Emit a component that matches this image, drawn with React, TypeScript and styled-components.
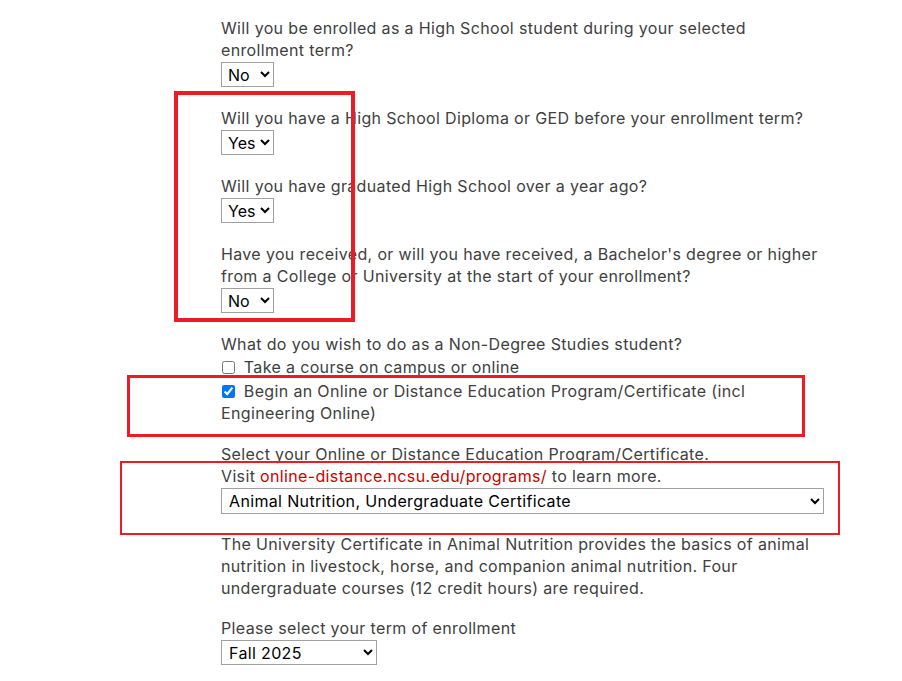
import React from "react";
import styled, { createGlobalStyle } from "styled-components";

const Global = createGlobalStyle`
  html, body { margin: 0; padding: 0; background: #ffffff; }
  body { font-family: Inter, "Liberation Sans", Arial, sans-serif; }
`;

const Page = styled.div`
  position: relative;
  width: 902px;
  min-height: 681px;
  overflow: hidden;
`;

const Form = styled.form`
  margin-left: 221px;
  width: 603px;
  padding-top: 17px;
  font-size: 16px;
  line-height: 22px;
  letter-spacing: 0.35px;
  color: #404040;
`;

const Question = styled.div<{ $gap?: number }>`
  margin-bottom: ${(p) => (p.$gap ?? 20)}px;
`;

const Label = styled.label`
  display: block;
`;

const Paragraph = styled.p`
  margin: 0;
`;

const Select = styled.select<{ $w: number; $h?: number; $tight?: boolean }>`
  display: block;
  width: ${(p) => p.$w}px;
  height: ${(p) => p.$h ?? 25}px;
  margin-top: 1px;
  padding: 0 0 0 ${(p) => (p.$tight ? 2 : 3)}px;
  font-family: Inter, "Liberation Sans", Arial, sans-serif;
  font-size: 16px;
  letter-spacing: ${(p) => (p.$tight ? 0 : 0.35)}px;
  color: #000;
  background: #fff;
  border: 1px solid #a0a0a0;
  border-radius: 0;
  box-sizing: border-box;
`;

const CheckList = styled.div`
  display: flex;
  flex-direction: column;
  gap: 2px;
  padding-top: 1px;
`;

const CheckRow = styled.label`
  display: block;
  line-height: 22px;
`;

const Check = styled.input`
  width: 13px;
  height: 13px;
  margin: 0 4px 0 1px;
  vertical-align: -1px;
  accent-color: #0075ff;
`;

const Link = styled.a`
  color: #cc0000;
  text-decoration: none;
`;

const Annotation = styled.div<{ $t: number; $l: number; $w: number; $h: number; $b: number }>`
  position: absolute;
  top: ${(p) => p.$t}px;
  left: ${(p) => p.$l}px;
  width: ${(p) => p.$w}px;
  height: ${(p) => p.$h}px;
  border: ${(p) => p.$b}px solid #ed1c24;
  box-sizing: border-box;
  pointer-events: none;
`;

export default function App() {
  return (
    <Page>
      <Global />
      <Form onSubmit={(e) => e.preventDefault()}>
        <Question>
          <Label>Will you be enrolled as a High School student during your selected enrollment term?</Label>
          <Select $w={53} $tight defaultValue="No">
            <option>Yes</option>
            <option>No</option>
          </Select>
        </Question>
        <Question>
          <Label>Will you have a High School Diploma or GED before your enrollment term?</Label>
          <Select $w={53} $tight defaultValue="Yes">
            <option>Yes</option>
            <option>No</option>
          </Select>
        </Question>
        <Question>
          <Label>Will you have graduated High School over a year ago?</Label>
          <Select $w={53} $tight defaultValue="Yes">
            <option>Yes</option>
            <option>No</option>
          </Select>
        </Question>
        <Question>
          <Label>Have you received, or will you have received, a Bachelor's degree or higher from a College or University at the start of your enrollment?</Label>
          <Select $w={53} $tight defaultValue="No">
            <option>Yes</option>
            <option>No</option>
          </Select>
        </Question>
        <Question $gap={19}>
          <Label>What do you wish to do as a Non-Degree Studies student?</Label>
          <CheckList>
            <CheckRow>
              <Check type="checkbox" /> Take a course on campus or online
            </CheckRow>
            <CheckRow>
              <Check type="checkbox" defaultChecked /> Begin an Online or Distance Education Program/Certificate (incl Engineering Online)
            </CheckRow>
          </CheckList>
        </Question>
        <Question $gap={19}>
          <Label>Select your Online or Distance Education Program/Certificate.</Label>
          <Label>
            Visit <Link href="#">online-distance.ncsu.edu/programs/</Link> to learn more.
          </Label>
          <Select $w={603} $h={26} defaultValue="an">
            <option value="an">Animal Nutrition, Undergraduate Certificate</option>
          </Select>
        </Question>
        <Question $gap={18}>
          <Paragraph>
            The University Certificate in Animal Nutrition provides the basics of animal nutrition in livestock, horse, and companion animal nutrition. Four undergraduate courses (12 credit hours) are required.
          </Paragraph>
        </Question>
        <Question>
          <Label>Please select your term of enrollment</Label>
          <Select $w={156} defaultValue="f25">
            <option value="f25">Fall 2025</option>
            <option value="s26">Spring 2026</option>
          </Select>
        </Question>
      </Form>
      <Annotation $t={91} $l={174} $w={181} $h={231} $b={4} />
      <Annotation $t={375} $l={127} $w={678} $h={62} $b={3} />
      <Annotation $t={461} $l={120} $w={720} $h={74} $b={2} />
    </Page>
  );
}
